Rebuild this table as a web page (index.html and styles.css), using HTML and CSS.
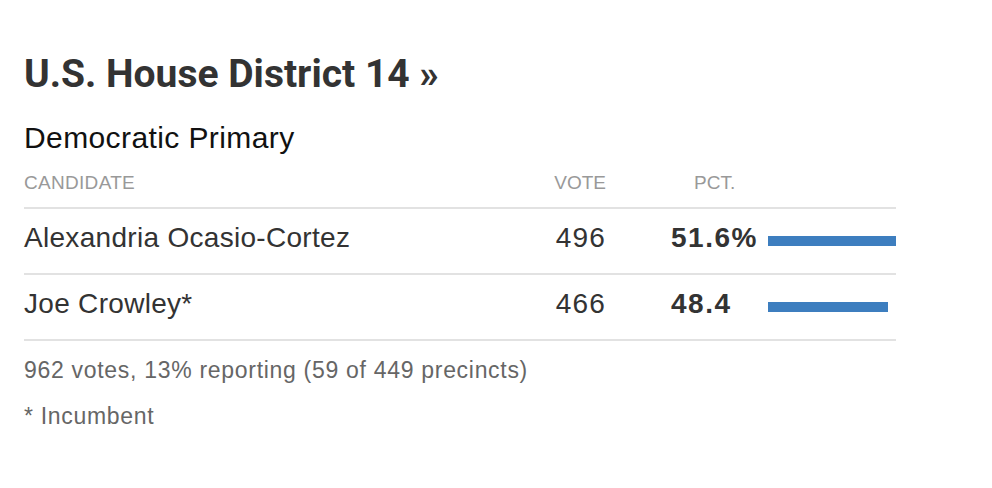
FILE: index.html
```
<!DOCTYPE html>
<html>
<head>
<meta charset="utf-8">
<link rel="stylesheet" href="styles.css">
</head>
<body>
<div class="race">
  <h2 class="race-title">U.S. House District 14 »</h2>
  <h3 class="race-sub">Democratic Primary</h3>
  <div class="results">
    <div class="row head">
      <div class="c-name">CANDIDATE</div>
      <div class="c-vote">VOTE</div>
      <div class="c-pct head-pct">PCT.</div>
      <div class="c-bar"></div>
    </div>
    <div class="row">
      <div class="c-name">Alexandria Ocasio-Cortez</div>
      <div class="c-vote">496</div>
      <div class="c-pct">51.6%</div>
      <div class="c-bar"><span class="bar" style="width:128px"></span></div>
    </div>
    <div class="row">
      <div class="c-name">Joe Crowley*</div>
      <div class="c-vote">466</div>
      <div class="c-pct">48.4</div>
      <div class="c-bar"><span class="bar" style="width:120px"></span></div>
    </div>
  </div>
  <p class="note first">962 votes, 13% reporting (59 of 449 precincts)</p>
  <p class="note second">* Incumbent</p>
</div>
</body>
</html>
```
FILE: styles.css
```
html, body {
  margin: 0;
  padding: 0;
  background: #fff;
}
body {
  font-family: "Liberation Sans", Arial, sans-serif;
  color: #333;
}
.race {
  padding: 51px 0 0 24px;
  width: 872px;
}
.race-title {
  margin: 0;
  font-family: Roboto, "Liberation Sans", sans-serif;
  font-size: 39px;
  line-height: 46px;
  font-weight: 700;
  color: #333;
}
.race-sub {
  margin: 23px 0 0;
  font-size: 30px;
  line-height: 36px;
  font-weight: 400;
  color: #111;
  letter-spacing: 0.4px;
}
.results {
  margin-top: 16px;
}
.row {
  display: grid;
  grid-template-columns: 1fr 75px 162px 128px;
  align-items: start;
  box-sizing: border-box;
  height: 66px;
  padding-top: 13px;
  border-bottom: 2px solid #e2e2e2;
  font-size: 28px;
  line-height: 32px;
  letter-spacing: 0.3px;
  color: #333;
}
.row.head {
  height: 37px;
  padding-top: 0;
  font-size: 19px;
  line-height: 22px;
  letter-spacing: 0.3px;
  color: #999;
}
.c-vote {
  text-align: right;
  letter-spacing: 1.2px;
}
.head .c-vote {
  letter-spacing: 0;
}
.c-pct {
  padding-left: 65px;
  font-weight: 700;
  letter-spacing: 1.5px;
}
.head .c-pct {
  font-weight: 400;
  padding-left: 88px;
  letter-spacing: 0;
}
.bar {
  display: block;
  height: 10px;
  margin-top: 14px;
  background: #3d7ebf;
}
.note {
  margin: 0;
  font-size: 23px;
  line-height: 26px;
  letter-spacing: 0.7px;
  color: #666;
}
.note.first {
  margin-top: 16px;
}
.note.second {
  margin-top: 20px;
}
```
